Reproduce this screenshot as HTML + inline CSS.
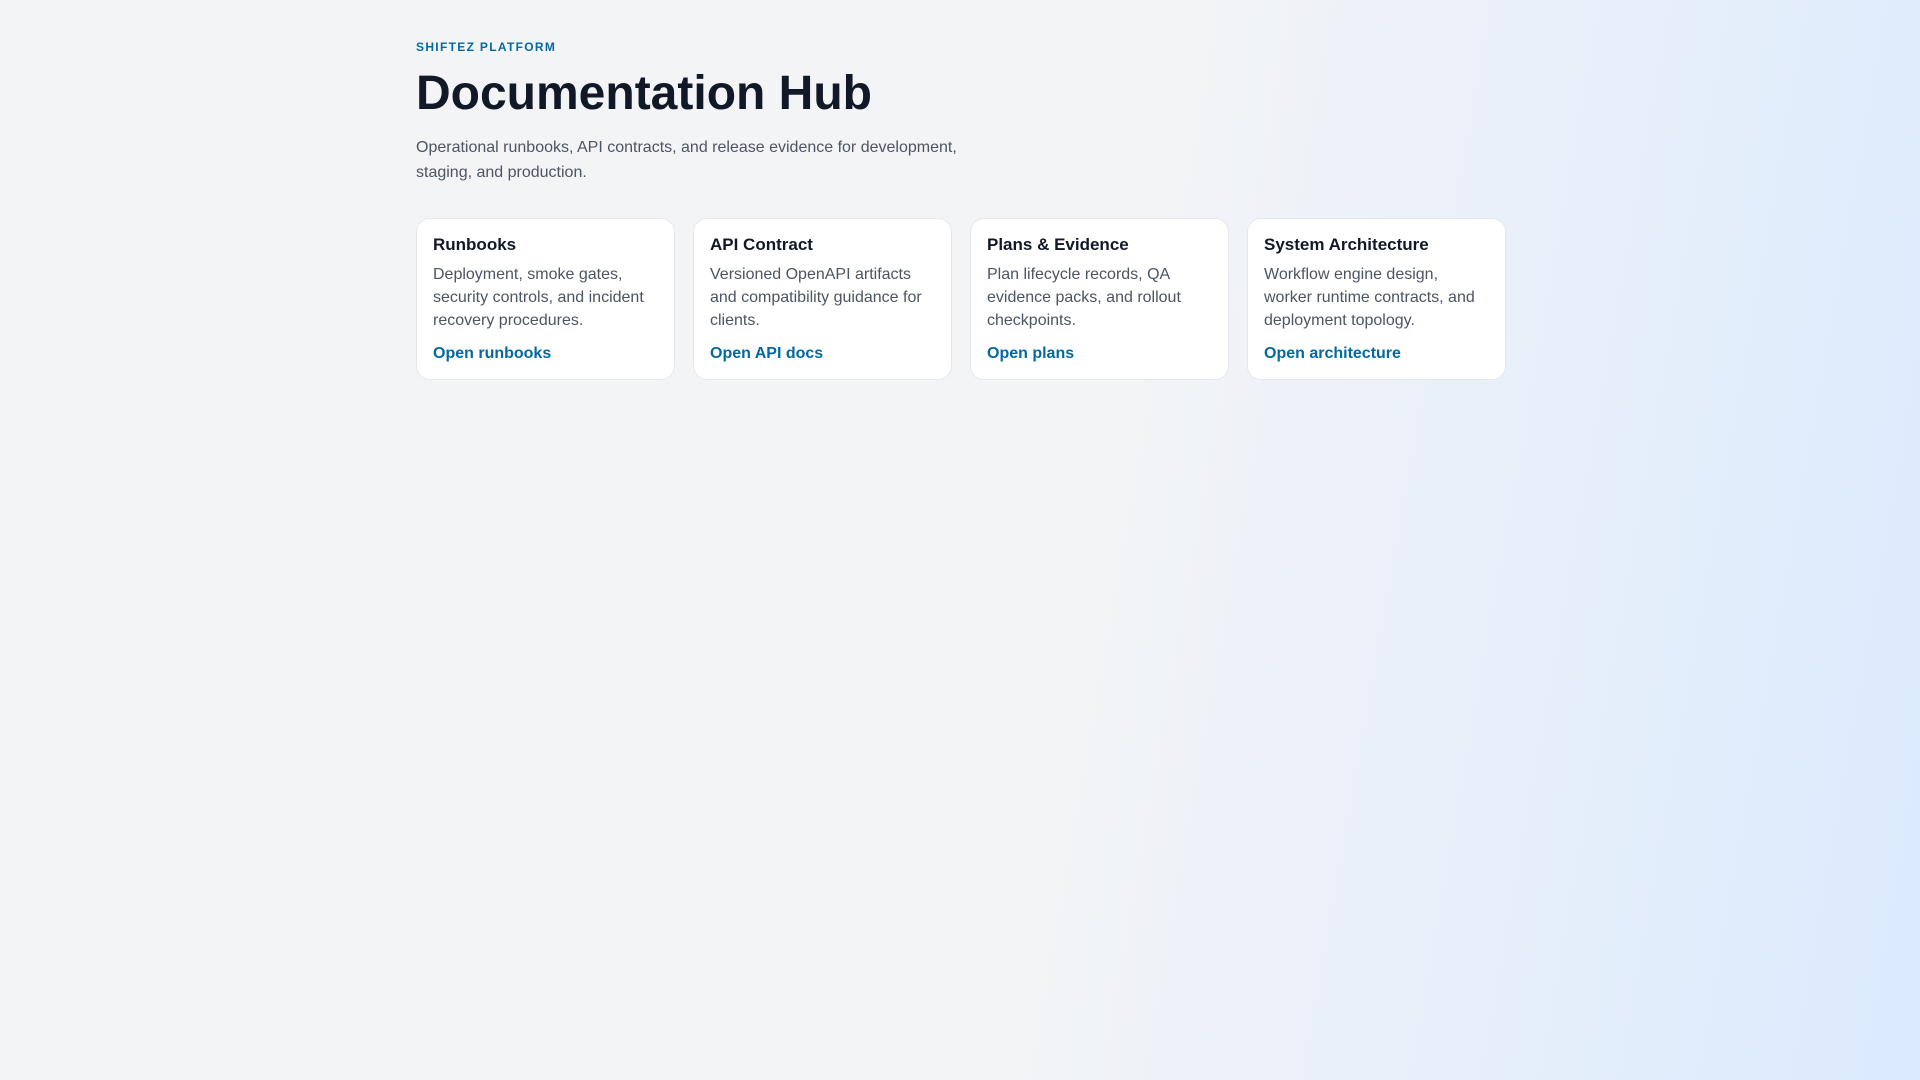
<!DOCTYPE html>
<html><head><meta charset="utf-8"><style>
*{box-sizing:border-box;margin:0;padding:0}
html,body{width:1920px;height:1080px;overflow:hidden}
body{font-family:"Liberation Sans",Arial,sans-serif;background:#f3f4f6;background-image:linear-gradient(100deg,#f3f4f6 0%,#f3f4f6 55%,#dbeafe 100%);}
.wrap{position:absolute;left:416px;top:0;width:1090px}
.eb{position:absolute;top:40px;font-size:12px;font-weight:700;letter-spacing:0.11em;color:#0369a1;line-height:14px;white-space:nowrap}
h1{position:absolute;top:65px;font-size:48px;font-weight:700;color:#111827;line-height:58px;white-space:nowrap}
p.lead{position:absolute;top:135px;width:560px;font-size:16px;line-height:25px;color:#4b5563}
.cards{position:absolute;top:218px;display:flex;gap:18px}
.card{position:relative;width:259px;height:162px;background:#fff;border:1px solid #e5e7eb;border-radius:14px;padding:16px 16px}
.card h2{font-size:17px;font-weight:700;color:#111827;line-height:20px}
.card .d{font-size:16px;line-height:23px;color:#4b5563;margin-top:8px}
.card a{position:absolute;top:125px;left:16px;font-size:16px;font-weight:700;color:#0369a1;text-decoration:none;line-height:20px}
</style></head><body><div class="wrap">
<div class="eb">SHIFTEZ PLATFORM</div>
<h1>Documentation Hub</h1>
<p class="lead">Operational runbooks, API contracts, and release evidence for development, staging, and production.</p>
<div class="cards">
<div class="card"><h2>Runbooks</h2><div class="d">Deployment, smoke gates, security controls, and incident recovery procedures.</div><a>Open runbooks</a></div>
<div class="card"><h2>API Contract</h2><div class="d">Versioned OpenAPI artifacts and compatibility guidance for clients.</div><a>Open API docs</a></div>
<div class="card"><h2>Plans &amp; Evidence</h2><div class="d">Plan lifecycle records, QA evidence packs, and rollout checkpoints.</div><a>Open plans</a></div>
<div class="card"><h2>System Architecture</h2><div class="d">Workflow engine design, worker runtime contracts, and deployment topology.</div><a>Open architecture</a></div>
</div></div></body></html>
